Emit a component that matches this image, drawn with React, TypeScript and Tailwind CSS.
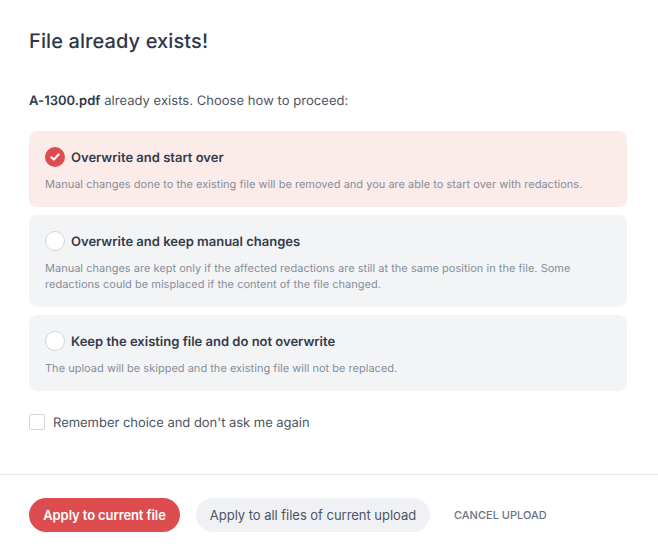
import React from 'react';

interface ChoiceProps {
  title: string;
  description: string;
  selected?: boolean;
}

const Choice: React.FC<ChoiceProps> = ({ title, description, selected }) => (
  <div className={`rounded-lg px-4 pt-4 pb-[15px] ${selected ? 'bg-[#fbebe9]' : 'bg-[#f3f4f6]'}`}>
    <div className="flex h-5 items-center gap-1.5">
      {selected ? (
        <span className="flex h-5 w-5 items-center justify-center rounded-full bg-[#dd4d50]">
          <svg width="12" height="12" viewBox="0 0 12 12" fill="none" stroke="#fff" strokeWidth="2.2" strokeLinecap="round" strokeLinejoin="round">
            <path d="M2.4 6.3 4.9 8.5 9.6 3.6" />
          </svg>
        </span>
      ) : (
        <span className="h-5 w-5 rounded-full border border-[#d1d5db] bg-white" />
      )}
      <span className="pt-[3px] text-[13px] font-semibold text-[#343b4b]">{title}</span>
    </div>
    <p className="mt-[9px] text-[11px] leading-4 tracking-[0.015px] text-[#868e9b]">{description}</p>
  </div>
);

export default function App() {
  return (
    <div className="h-[552px] w-[658px] overflow-hidden bg-white font-['Inter',sans-serif] [text-rendering:geometricPrecision]">
      <div className="px-[29px] pt-[28px]">
        <h1 className="text-[20px] leading-[26px] font-medium tracking-[0.1px] text-[#2f3748]">File already exists!</h1>
        <p className="mt-[37px] text-[13px] leading-[20px] tracking-[0.04px] text-[#4b5563]">
          <span className="font-semibold text-[#2f3748]">A-1300.pdf</span> already exists. Choose how to proceed:
        </p>
        <div className="mt-[20px] flex w-[598px] flex-col gap-2">
          <Choice
            selected
            title="Overwrite and start over"
            description="Manual changes done to the existing file will be removed and you are able to start over with redactions."
          />
          <Choice
            title="Overwrite and keep manual changes"
            description="Manual changes are kept only if the affected redactions are still at the same position in the file. Some redactions could be misplaced if the content of the file changed."
          />
          <Choice
            title="Keep the existing file and do not overwrite"
            description="The upload will be skipped and the existing file will not be replaced."
          />
        </div>
        <label className="mt-[23px] flex items-center gap-2">
          <span className="h-4 w-4 rounded-[2px] border border-[#d1d5db] bg-white" />
          <span className="pt-[2px] text-[13px] leading-[14px] tracking-[-0.03px] text-[#4b5563]">Remember choice and don't ask me again</span>
        </label>
      </div>
      <div className="mt-[44px] border-t border-[#e5e7eb] px-[29px] pt-[23px]">
        <div className="flex items-center">
          <button className="h-[34px] w-[151px] rounded-full bg-[#dd4d50] pt-[2px] text-[13px] font-semibold tracking-[-0.1px] text-white">
            Apply to current file
          </button>
          <button className="ml-4 h-[34px] w-[234px] rounded-full bg-[#f0f1f5] pt-[2px] text-[13px] tracking-[-0.03px] text-[#4b5563]">
            Apply to all files of current upload
          </button>
          <button className="ml-6 text-[11px] font-medium text-[#6b7280]">CANCEL UPLOAD</button>
        </div>
      </div>
    </div>
  );
}
